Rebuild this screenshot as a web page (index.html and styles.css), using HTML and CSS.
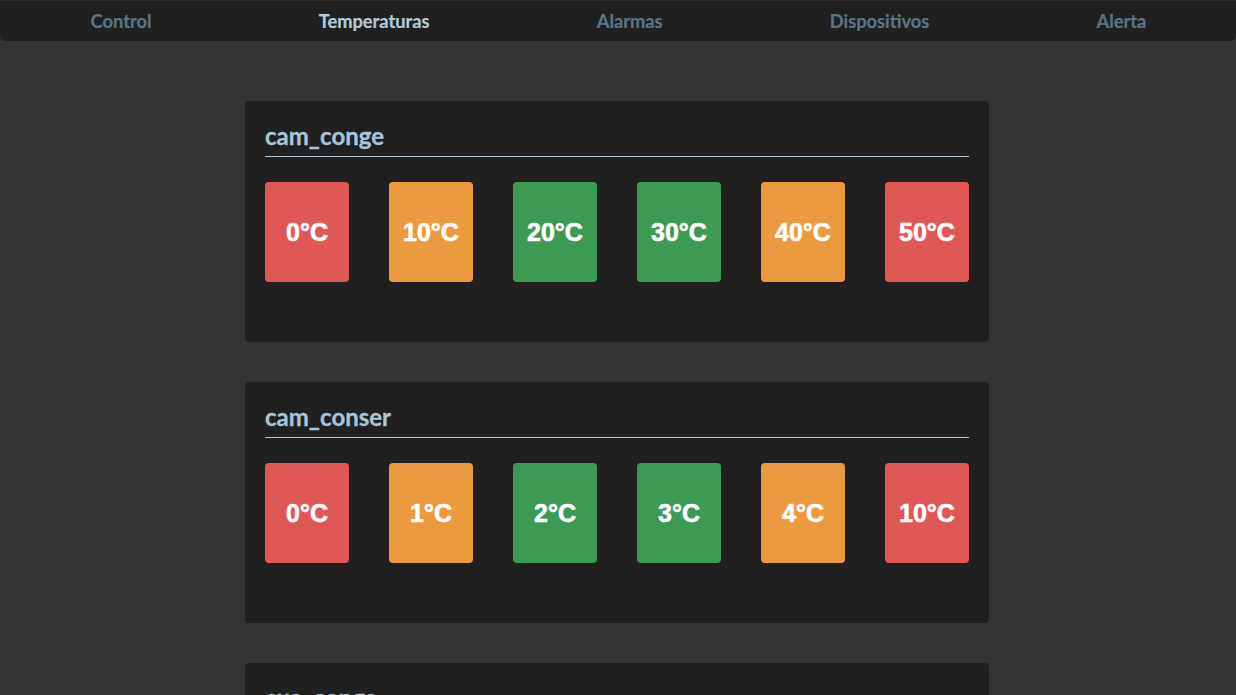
FILE: index.html
```html
<!DOCTYPE html>
<html lang="es">
<head>
<meta charset="utf-8">
<title>Temperaturas</title>
<link rel="stylesheet" href="styles.css">
</head>
<body>
<nav class="nav">
  <a class="nav-item">Control</a>
  <a class="nav-item active">Temperaturas</a>
  <a class="nav-item">Alarmas</a>
  <a class="nav-item">Dispositivos</a>
  <a class="nav-item">Alerta</a>
</nav>
<main class="content">
  <section class="card">
    <h2 class="card-title">cam_conge</h2>
    <div class="tiles">
      <div class="tile red">0°C</div>
      <div class="tile orange">10°C</div>
      <div class="tile green">20°C</div>
      <div class="tile green">30°C</div>
      <div class="tile orange">40°C</div>
      <div class="tile red">50°C</div>
    </div>
  </section>
  <section class="card">
    <h2 class="card-title">cam_conser</h2>
    <div class="tiles">
      <div class="tile red">0°C</div>
      <div class="tile orange">1°C</div>
      <div class="tile green">2°C</div>
      <div class="tile green">3°C</div>
      <div class="tile orange">4°C</div>
      <div class="tile red">10°C</div>
    </div>
  </section>
  <section class="card">
    <h2 class="card-title">cua_conge</h2>
    <div class="tiles">
      <div class="tile red">0°C</div>
      <div class="tile orange">10°C</div>
      <div class="tile green">20°C</div>
      <div class="tile green">30°C</div>
      <div class="tile orange">40°C</div>
      <div class="tile red">50°C</div>
    </div>
  </section>
</main>
</body>
</html>
```
FILE: styles.css
```css
html, body {
  margin: 0;
  padding: 0;
  background: #333333;
  font-family: Lato, "Liberation Sans", sans-serif;
}

.nav {
  height: 41px;
  background: #202020;
  border-radius: 0 0 5px 5px;
  box-shadow: inset 0 1px 0 #2c2c2c;
  display: flex;
  align-items: center;
  justify-content: space-around;
  padding: 0 6px 0 7px;
}

.nav-item {
  font-size: 18.3px;
  font-weight: 700;
  color: #5d7484;
  text-decoration: none;
  -webkit-text-stroke: 0.2px currentColor;
}

.nav-item.active {
  color: #b3cadb;
}

.content {
  display: flex;
  flex-direction: column;
  align-items: center;
  gap: 40px;
  padding: 60px 2px 0 0;
}

.card {
  width: 704px;
  padding: 20px 20px 60px;
  background: #202020;
  border-radius: 4px;
}

.card-title {
  margin: 0;
  font-size: 24px;
  font-weight: 700;
  line-height: 28px;
  color: #a8c4d8;
  padding: 1px 0 6px;
  border-bottom: 1px solid #b6c7d3;
  -webkit-text-stroke: 0.3px #a8c4d8;
}

.tiles {
  display: flex;
  justify-content: space-between;
  margin-top: 25px;
}

.tile {
  width: 84px;
  height: 100px;
  border-radius: 4px;
  display: flex;
  align-items: center;
  justify-content: center;
  color: #ffffff;
  font-family: "Liberation Sans", Arial, sans-serif;
  font-weight: 700;
  font-size: 25px;
  -webkit-text-stroke: 0.6px #ffffff;
}

.red { background: #e05855; }
.orange { background: #ec9a40; }
.green { background: #3c9a52; }
```
